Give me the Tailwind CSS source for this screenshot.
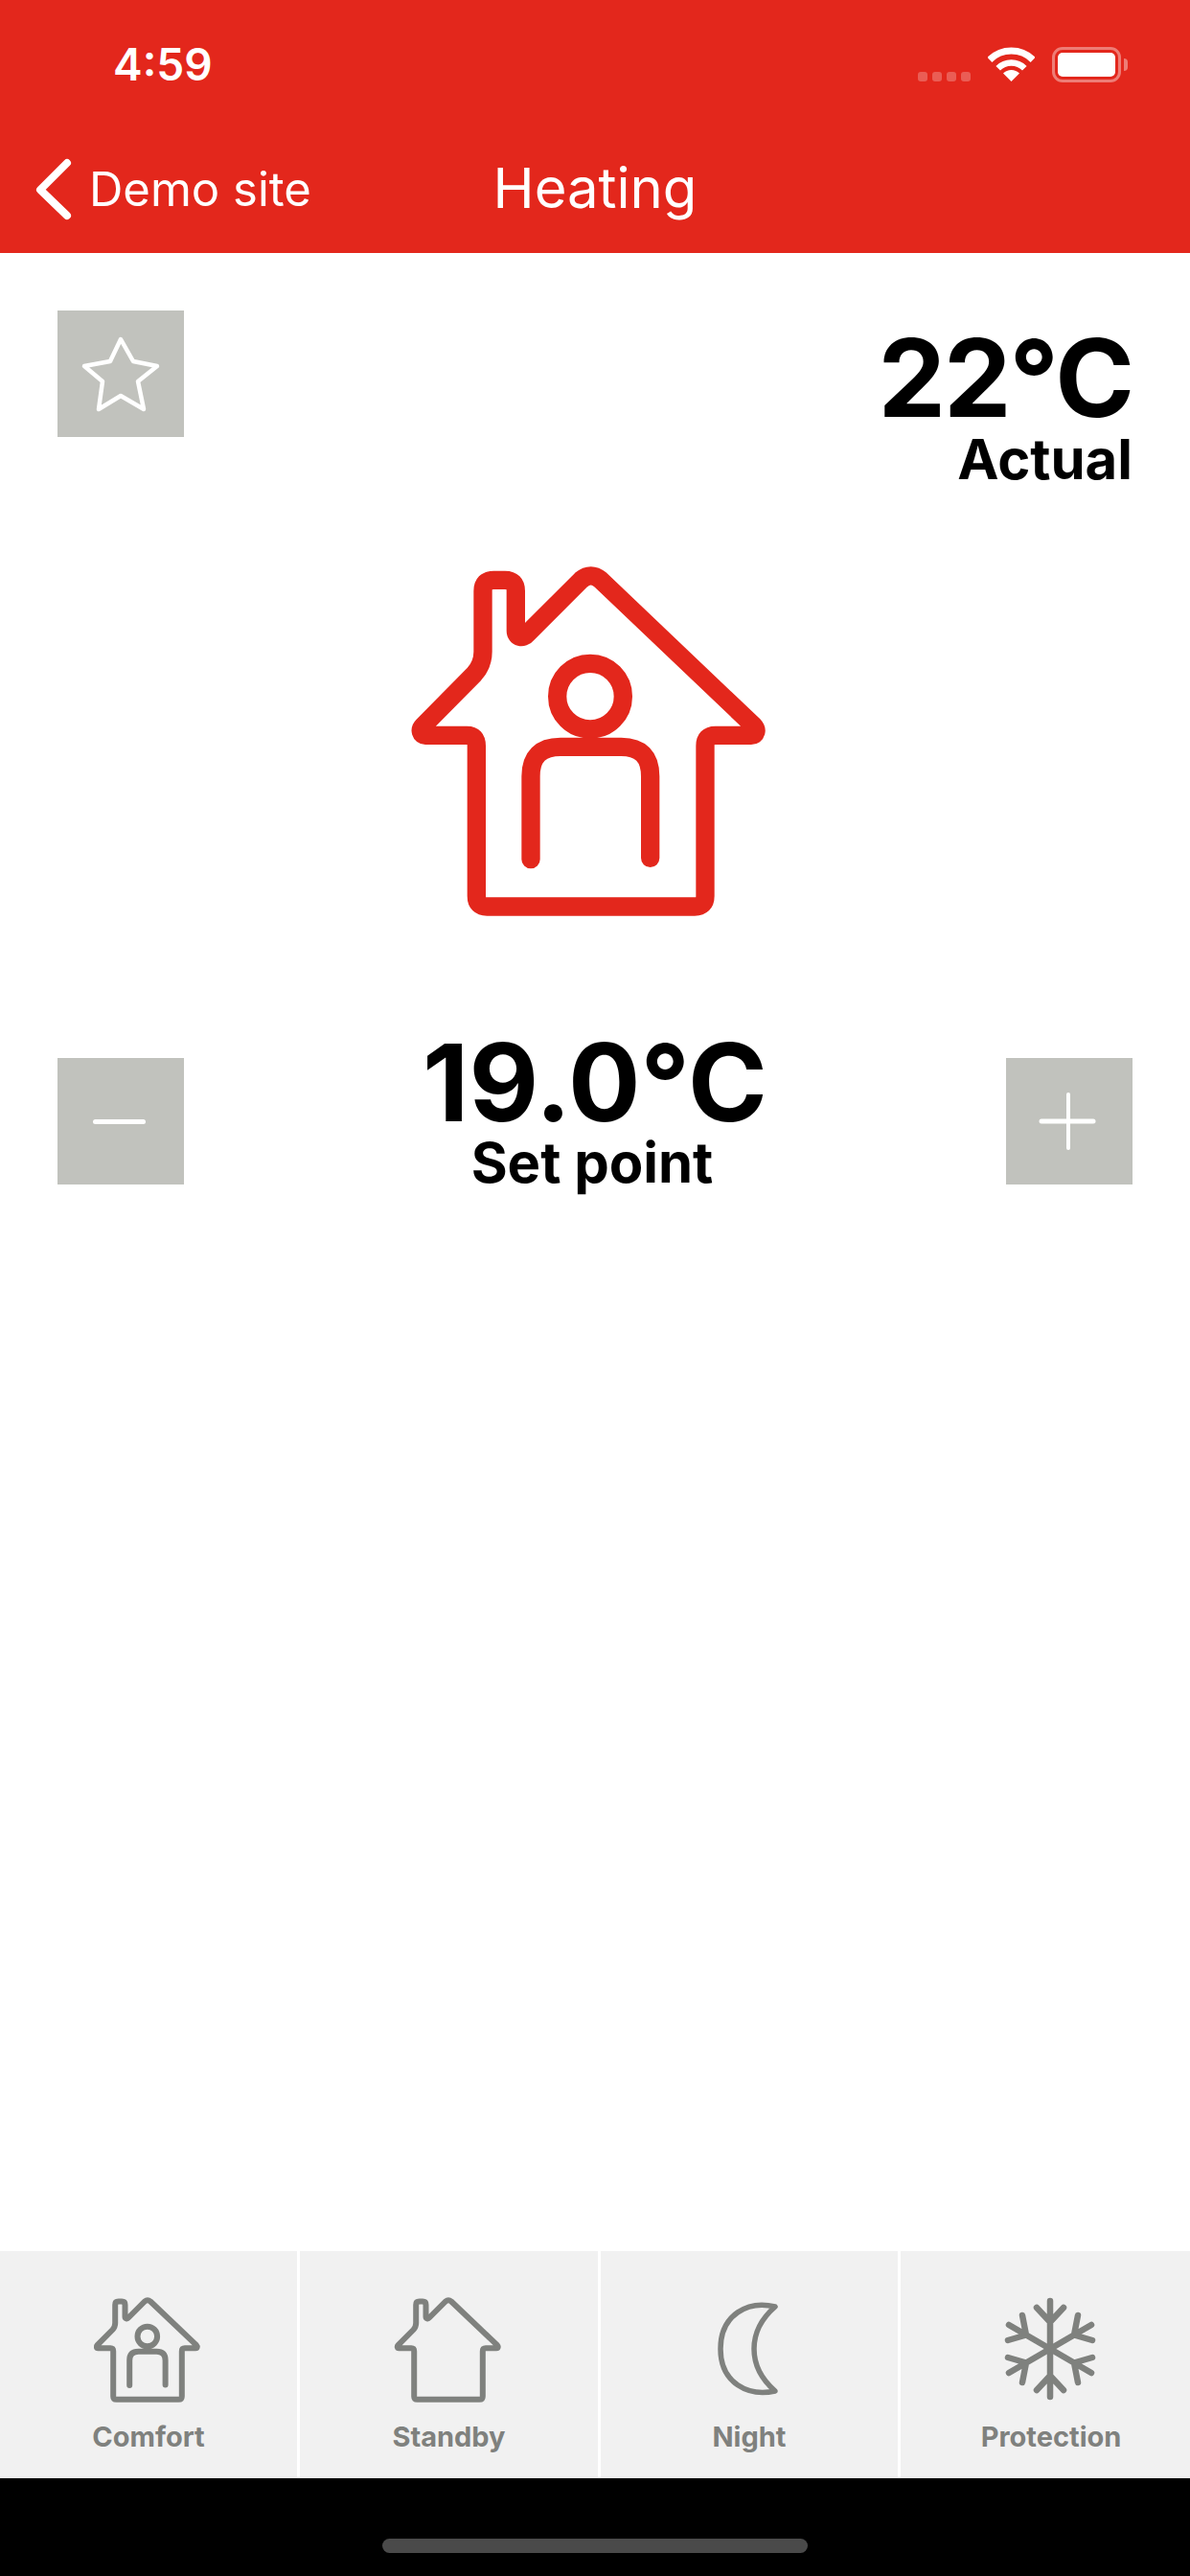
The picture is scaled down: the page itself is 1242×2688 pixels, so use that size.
<!DOCTYPE html>
<html lang="en">
<head>
    <meta charset="UTF-8">
    <meta name="viewport" content="width=device-width, initial-scale=1.0">
    <title>Heating</title>
    <script src="https://cdn.jsdelivr.net/npm/@tailwindcss/browser@4"></script>
</head>
<body class="bg-white font-['Inter',sans-serif]">
    <div class="w-[1242px] h-[2688px] flex flex-col overflow-hidden">
        <!-- status bar + nav -->
        <header class="h-[264px] bg-[#e3271c] text-white">
            <div class="h-[132px] relative">
                <span class="absolute left-[118px] top-[39px] text-[46px] leading-[56px] font-semibold">4:59</span>
                <div class="absolute left-[958px] top-[75px] flex gap-[5px]">
                    <span class="w-[10px] h-[10px] rounded-[3px] bg-white/25"></span>
                    <span class="w-[10px] h-[10px] rounded-[3px] bg-white/25"></span>
                    <span class="w-[10px] h-[10px] rounded-[3px] bg-white/25"></span>
                    <span class="w-[10px] h-[10px] rounded-[3px] bg-white/25"></span>
                </div>
                <svg class="absolute left-[1031px] top-[49px]" width="49" height="37" viewBox="0 0 49 37" fill="none" stroke="white">
                    <path d="M1.9 13.4A32 32 0 0 1 47.1 13.4" stroke-width="7"/>
                    <path d="M10.7 22.2A19.5 19.5 0 0 1 38.3 22.2" stroke-width="6.5"/>
                    <path d="M24.5 36L16 27.5A12 12 0 0 1 33 27.5Z" fill="white" stroke="none"/>
                </svg>
                <div class="absolute left-[1098px] top-[49px] w-[72px] h-[37px] rounded-[11px] border-[3px] border-white/40 p-[3px]">
                    <div class="w-full h-full bg-white rounded-[5px]"></div>
                </div>
                <span class="absolute left-[1173px] top-[61px] w-[4px] h-[13px] rounded-r-[4px] bg-white/40"></span>
            </div>
            <nav class="grid grid-cols-[1fr_auto_1fr] items-center h-[132px]">
                <a class="flex items-center text-[49px] leading-[60px]">
                    <svg class="ml-[36px] mr-[15px]" width="42" height="66" viewBox="0 0 42 66" fill="none" stroke="white" stroke-width="8" stroke-linecap="round" stroke-linejoin="round">
                        <path d="M34 5L6 33L34 60"/>
                    </svg>
                    Demo site
                </a>
                <h1 class="text-[58px] leading-[70px] pb-[4px] font-normal">Heating</h1>
                <span></span>
            </nav>
        </header>

        <main class="flex-1 flex flex-col">
            <div class="h-[186px] mt-[60px] pl-[60px] pr-[60px] flex justify-between items-start">
                <button class="w-[132px] h-[132px] bg-[#c1c2bd]">
                    <svg width="132" height="132" viewBox="0 0 132 132" fill="none" stroke="white" stroke-width="4.500" stroke-linejoin="round">
                        <path d="M66 30L79 53L104 58L84 74L90 103L66 89L43 103L47 74L28 58L55 53Z"/>
                    </svg>
                </button>
                <div class="text-right text-black font-bold mt-[16px]">
                    <div class="text-[112px] leading-[108px] tracking-[-2px]">22°C</div>
                    <div class="text-[58px] leading-[62px]">Actual</div>
                </div>
            </div>

            <svg class="mt-[60px] ml-[400px]" width="420" height="400" viewBox="0 0 1260 1200" fill="none" stroke="#e3271c" stroke-width="58" stroke-linecap="round" stroke-linejoin="round">
                <path d="M292 625Q292 592 262 592H132C118 592 112 575 125 562L285 400Q312 370 312 330V140Q312 106 346 106H381Q415 106 415 140V265C415 285 438 290 450 275L620 105Q650 80 680 105L1160 562C1172 575 1168 592 1152 592H1040Q1008 592 1008 625V1095Q1008 1128 975 1128H325Q292 1128 292 1095Z"/>
                <circle cx="648" cy="470" r="103"/>
                <path d="M462 980V720Q462 628 555 628H745Q836 628 836 720V976"/>
            </svg>

            <div class="mt-[134px] px-[60px] flex justify-between items-start">
                <button class="w-[132px] h-[132px] bg-[#c1c2bd] flex items-center pl-[37px]">
                    <span class="w-[55px] h-[5px] rounded-full bg-white"></span>
                </button>
                <div class="text-center text-black font-bold -mt-[29px]">
                    <div class="text-[112px] leading-[108px]">19.0°C</div>
                    <div class="text-[58px] leading-[60px] pr-[6px]">Set point</div>
                </div>
                <button class="w-[132px] h-[132px] bg-[#c1c2bd]">
                    <svg width="132" height="132" viewBox="0 0 132 132" fill="none" stroke="white" stroke-linecap="round">
                        <path d="M37 66H91" stroke-width="5"/>
                        <path d="M65 38V94" stroke-width="4"/>
                    </svg>
                </button>
            </div>
        </main>

        <!-- mode tabs -->
        <div class="h-[237px] grid grid-cols-[310px_311px_310px_314px] gap-x-[3px] text-[#7f817e] text-[29px] leading-[36px] font-bold overflow-hidden">
            <div class="bg-[#f1f1f1] flex flex-col items-center pt-[42px]">
                <svg class="-ml-[6px]" width="126" height="120" viewBox="0 0 1260 1200" fill="none" stroke="#7f817e" stroke-width="60" stroke-linecap="round" stroke-linejoin="round">
                    <path d="M292 625Q292 592 262 592H132C118 592 112 575 125 562L285 400Q312 370 312 330V140Q312 106 346 106H381Q415 106 415 140V265C415 285 438 290 450 275L620 105Q650 80 680 105L1160 562C1172 575 1168 592 1152 592H1040Q1008 592 1008 625V1095Q1008 1128 975 1128H325Q292 1128 292 1095Z"/>
                    <circle cx="648" cy="470" r="103"/>
                    <path d="M462 980V720Q462 628 555 628H745Q836 628 836 720V976"/>
                </svg>
                <span class="mt-[14px]">Comfort</span>
            </div>
            <div class="bg-[#f1f1f1] flex flex-col items-center pt-[42px]">
                <svg class="-ml-[6px]" width="126" height="120" viewBox="0 0 1260 1200" fill="none" stroke="#7f817e" stroke-width="60" stroke-linecap="round" stroke-linejoin="round">
                    <path d="M292 625Q292 592 262 592H132C118 592 112 575 125 562L285 400Q312 370 312 330V140Q312 106 346 106H381Q415 106 415 140V265C415 285 438 290 450 275L620 105Q650 80 680 105L1160 562C1172 575 1168 592 1152 592H1040Q1008 592 1008 625V1095Q1008 1128 975 1128H325Q292 1128 292 1095Z"/>
                </svg>
                <span class="mt-[14px]">Standby</span>
            </div>
            <div class="bg-[#f1f1f1] flex flex-col items-center pt-[42px]">
                <div class="h-[120px] flex items-center">
                    <svg class="-ml-[3px]" width="64" height="100" viewBox="0 0 64 100" fill="none" stroke="#7f817e" stroke-width="5.5" stroke-linejoin="round">
                        <path d="M60 6C32 -1 3 14 3 50C3 86 32 100 60 94C45 81 38 67 38 50C38 33 45 19 60 6Z"/>
                    </svg>
                </div>
                <span class="mt-[14px]">Night</span>
            </div>
            <div class="bg-[#f1f1f1] flex flex-col items-center pt-[42px]">
                <div class="h-[120px] flex items-center">
                    <svg class="-ml-[3px]" width="100" height="110" viewBox="-50 -55 100 110" fill="none" stroke="#7f817e" stroke-width="6.5" stroke-linecap="round" stroke-linejoin="round">
                        <path d="M0 -50V50M-14 -43L0 -28L14 -43M-14 43L0 28L14 43"/>
                        <path d="M-43 -25L43 25M-29 -35L-25 -14.500L-44 -9M29 35L25 14.500L44 9"/>
                        <path d="M43 -25L-43 25M29 -35L25 -14.500L44 -9M-29 35L-25 14.500L-44 9"/>
                    </svg>
                </div>
                <span class="mt-[14px]">Protection</span>
            </div>
        </div>

        <!-- home indicator -->
        <div class="h-[102px] bg-black flex justify-center pt-[63px]">
            <span class="w-[444px] h-[15px] rounded-full bg-[#4a4a4a]"></span>
        </div>
    </div>
</body>
</html>
